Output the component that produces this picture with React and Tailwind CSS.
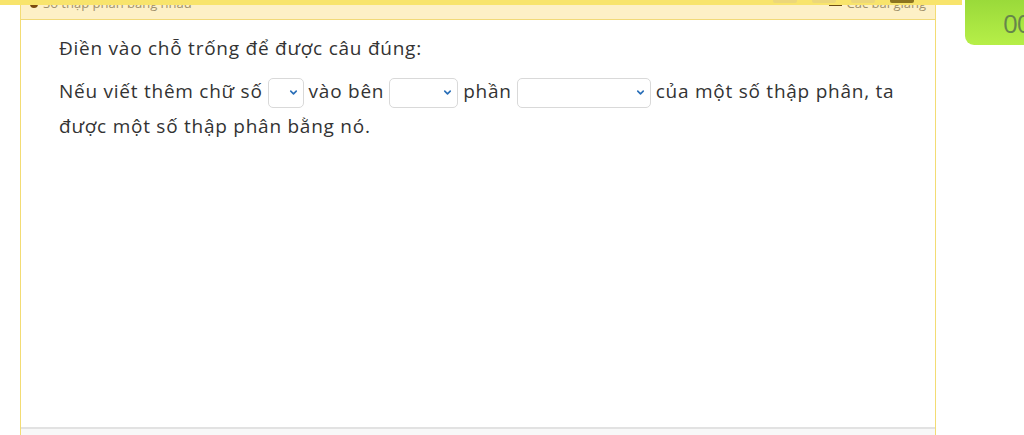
import { ChevronDown } from 'lucide-react';

const Blank = ({ width }) => (
  <span
    className="mx-[5px] inline-flex h-[30px] items-center justify-end rounded-[5px] border border-[#d9d9d9] bg-white pr-[4px] align-middle"
    style={{ width }}
  >
    <ChevronDown className="h-[11px] w-[11px] text-[#2a6fb8]" strokeWidth={3.5} />
  </span>
);

export default function App() {
  return (
    <div className="flex h-[435px] w-[1024px] overflow-hidden bg-white font-['Open_Sans',sans-serif] text-[#333]">
      <div className="flex w-[962px] shrink-0 flex-col">
        <div className="relative z-10 flex h-[5px] shrink-0 items-start gap-[15px] bg-[#f8e46c] pl-[773px]">
          <span className="h-[3px] w-[24px] rounded-b-[2px] bg-[#ecd77a]" />
          <span className="h-[3px] w-[24px] rounded-b-[2px] bg-[#ecd77a]" />
          <span className="h-[3px] w-[24px] rounded-b-[2px] bg-[#ecd77a]" />
          <span className="h-[3px] w-[24px] rounded-b-[2px] bg-[#8c7420]" />
        </div>
        <div className="ml-[20px] flex w-[916px] flex-1 flex-col border-x border-[#f3dc74]">
          <div className="flex h-[15px] shrink-0 items-end justify-between overflow-hidden border-b border-[#f1d978] bg-[#fdf0c6] px-[9px] text-[13px] leading-none text-[#a0906c]">
            <div className="mb-[9px] flex items-center gap-[5px]">
              <span className="h-[8px] w-[8px] rounded-full bg-[#7a4a10]" />
              <span>Số thập phân bằng nhau</span>
            </div>
            <div className="mb-[9px] flex items-center gap-[5px]">
              <span className="h-[4px] w-[13px] bg-[#6b4a14]" />
              <span>Các bài giảng</span>
            </div>
          </div>
          <div className="flex-1 pl-[38px] pr-[24px] pt-[14px] text-[19px] tracking-[0.75px]">
            <p className="leading-[28px]">Điền vào chỗ trống để được câu đúng:</p>
            <p className="mt-[12px] leading-[35px]">
              Nếu viết thêm chữ số
              <Blank width={36} />
              vào bên
              <Blank width={69} />
              phần
              <Blank width={134} />
              của một số thập phân, ta được một số thập phân bằng nó.
            </p>
          </div>
          <div className="h-[2px] shrink-0 bg-[#e2e2e2]" />
          <div className="h-[6px] shrink-0 bg-[#f8f8f8]" />
        </div>
      </div>
      <div className="ml-[3px] flex h-[45px] w-[70px] shrink-0 items-center rounded-bl-[9px] bg-gradient-to-b from-[#9ada3a] to-[#b6ef48] pl-[38px] text-[26px] leading-none tracking-[-1px] text-[#66864a]">
        00
      </div>
    </div>
  );
}
